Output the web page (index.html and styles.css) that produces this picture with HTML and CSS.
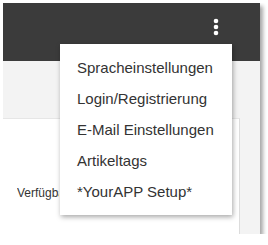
FILE: index.html
```html
<!DOCTYPE html>
<html>
<head>
  <title>Einstellungen</title>
  <link rel="stylesheet" href="styles.css">
</head>

<body>
  <div class="window">
    <header class="topbar">
      <button class="menu-toggle" aria-label="Menü">
        <svg width="6" height="18" viewBox="0 0 6 18">
          <circle cx="3" cy="3" r="2.3" fill="#ffffff"/>
          <circle cx="3" cy="9" r="2.3" fill="#ffffff"/>
          <circle cx="3" cy="15" r="2.3" fill="#ffffff"/>
        </svg>
      </button>
    </header>

    <main class="content">
      <div class="card">
        <span class="card__label">Verfügbare Artikel</span>
      </div>
    </main>

    <ul class="dropdown">
      <li class="dropdown__item">Spracheinstellungen</li>
      <li class="dropdown__item">Login/Registrierung</li>
      <li class="dropdown__item">E-Mail Einstellungen</li>
      <li class="dropdown__item">Artikeltags</li>
      <li class="dropdown__item">*YourAPP Setup*</li>
    </ul>
  </div>
</body>

</html>
```

FILE: styles.css
```css
* {
  box-sizing: border-box;
}

body {
  margin: 3px 0 0 3px;
  font-family: "Liberation Sans", Arial, sans-serif;
  color: #333333;
  background-color: #ffffff;
}

.window {
  position: relative;
  width: 257px;
  height: 231px;
  display: flex;
  flex-direction: column;
  background-color: #f3f3f3;
  box-shadow: 3px 3px 4px rgba(0, 0, 0, 0.35);
}

.topbar {
  height: 58px;
  flex-shrink: 0;
  background-color: #3b3b3b;
  display: flex;
  justify-content: flex-end;
  align-items: flex-start;
  padding: 15px 41px 0 0;
}

.menu-toggle {
  border: none;
  background: none;
  padding: 0;
  width: 6px;
  height: 18px;
  cursor: pointer;
  display: flex;
}

.content {
  flex: 1;
  padding-top: 57px;
  overflow: hidden;
}

.card {
  width: 237px;
  height: 100%;
  background-color: #ffffff;
  border-top: 1px solid #e6e6e6;
  border-right: 1px solid #dcdcdc;
  padding: 66px 0 0 14px;
}

/* the rest of the label sits under the open menu */
.card__label {
  display: inline-block;
  max-width: 42px;
  overflow: hidden;
  font-size: 12px;
  line-height: 16px;
  white-space: nowrap;
  vertical-align: top;
}

.dropdown {
  position: absolute;
  left: 57px;
  top: 41px;
  width: 172px;
  margin: 0;
  padding: 8px 0;
  list-style: none;
  background-color: #ffffff;
  box-shadow: 1px 2px 5px rgba(0, 0, 0, 0.35);
}

.dropdown__item {
  height: 31px;
  line-height: 31px;
  padding-left: 17px;
  font-size: 15px;
  white-space: nowrap;
  cursor: pointer;
}
```
